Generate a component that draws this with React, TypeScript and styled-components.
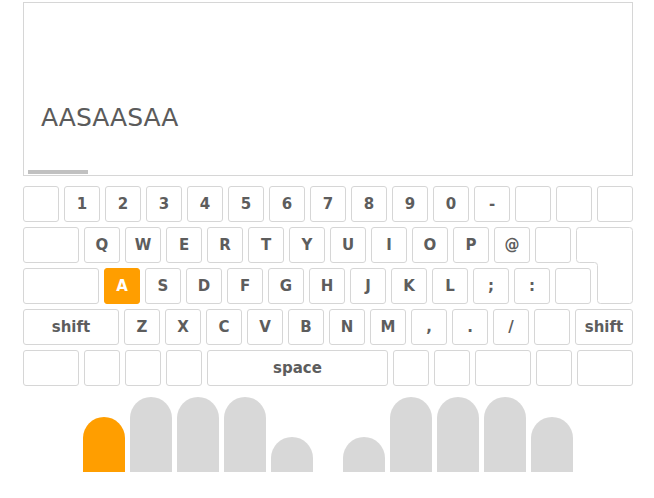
import React from "react";
import styled, { createGlobalStyle } from "styled-components";

const GlobalStyle = createGlobalStyle`
  html, body { margin: 0; padding: 0; background: #ffffff; }
  body { font-family: "DejaVu Sans", Verdana, sans-serif; }
  * { box-sizing: border-box; }
`;

const Page = styled.div`
  width: 654px;
  height: 498px;
  padding: 2px 0 0 23px;
  display: flex;
  flex-direction: column;
`;

const TextBox = styled.div`
  width: 610px;
  height: 174px;
  border: 1px solid #d6d6d6;
  display: flex;
  flex-direction: column;
  padding: 100px 0 1px 0;
`;

const Typed = styled.div`
  font-family: "DejaVu Sans", Verdana, sans-serif;
  font-size: 25px;
  line-height: 30px;
  color: #5b5b5b;
  padding-left: 17px;
  flex: 1;
`;

const ScrollBar = styled.div`
  width: 60px;
  height: 4px;
  margin-left: 4px;
  background: #c1c1c1;
`;

const Keyboard = styled.div`
  margin-top: 10px;
  display: flex;
  flex-direction: column;
  gap: 5px;
  width: 610px;
`;

const Row = styled.div`
  display: flex;
  gap: 5px;
  height: 36px;
`;

const Key = styled.div<{ $w?: number; $active?: boolean }>`
  width: ${(p) => p.$w ?? 36}px;
  height: 36px;
  flex: none;
  border: 1px solid ${(p) => (p.$active ? "#ff9e00" : "#d6d6d6")};
  border-radius: 3px;
  background: ${(p) => (p.$active ? "#ff9e00" : "#ffffff")};
  color: ${(p) => (p.$active ? "#ffffff" : "#5d5d5d")};
  font-family: "DejaVu Sans", Verdana, sans-serif;
  font-weight: bold;
  font-size: 15px;
  display: flex;
  align-items: center;
  justify-content: center;
`;

const EnterSlot = styled.div`
  width: 57px;
  height: 36px;
  flex: none;
  overflow: visible;
  svg { display: block; overflow: visible; }
`;

const Spacer = styled.div<{ $w: number }>`
  width: ${(p) => p.$w}px;
  flex: none;
`;

const Hands = styled.div`
  margin-top: 11px;
  display: flex;
  justify-content: center;
  gap: 30px;
  width: 610px;
`;

const Hand = styled.div`
  display: flex;
  align-items: flex-end;
  gap: 5px;
  height: 75px;
`;

const Finger = styled.div<{ $h: number; $active?: boolean }>`
  width: 42px;
  height: ${(p) => p.$h}px;
  border-radius: 21px 21px 0 0;
  background: ${(p) => (p.$active ? "#ff9e00" : "#d8d8d8")};
`;

const row1 = ["", "1", "2", "3", "4", "5", "6", "7", "8", "9", "0", "-", "", "", ""];
const row2 = ["Q", "W", "E", "R", "T", "Y", "U", "I", "O", "P", "@", ""];
const row3 = ["A", "S", "D", "F", "G", "H", "J", "K", "L", ";", ":", ""];
const row4 = ["Z", "X", "C", "V", "B", "N", "M", ",", ".", "/", ""];
const row5: { l: string; w: number }[] = [
  { l: "", w: 56 },
  { l: "", w: 36 },
  { l: "", w: 36 },
  { l: "", w: 36 },
  { l: "space", w: 181 },
  { l: "", w: 36 },
  { l: "", w: 36 },
  { l: "", w: 56 },
  { l: "", w: 36 },
  { l: "", w: 56 },
];

const EnterKey = () => (
  <EnterSlot>
    <svg width="57" height="77" viewBox="0 0 57 77">
      <path
        d="M3.5 0.5 H53.5 Q56.5 0.5 56.5 3.5 V73.5 Q56.5 76.5 53.5 76.5 H24.5 Q21.5 76.5 21.5 73.5 V38.5 Q21.5 35.5 18.5 35.5 H3.5 Q0.5 35.5 0.5 32.5 V3.5 Q0.5 0.5 3.5 0.5 Z"
        fill="#ffffff"
        stroke="#d6d6d6"
        strokeWidth="1"
      />
    </svg>
  </EnterSlot>
);

export default function App() {
  return (
    <>
      <GlobalStyle />
      <Page>
        <TextBox>
          <Typed>AASAASAA</Typed>
          <ScrollBar />
        </TextBox>
        <Keyboard>
          <Row>
            {row1.map((k, i) => (
              <Key key={i}>{k}</Key>
            ))}
          </Row>
          <Row>
            <Key $w={56} />
            {row2.map((k, i) => (
              <Key key={i}>{k}</Key>
            ))}
            <EnterKey />
          </Row>
          <Row>
            <Key $w={76} />
            {row3.map((k, i) => (
              <Key key={i} $active={k === "A"}>
                {k}
              </Key>
            ))}
            <Spacer $w={36} />
          </Row>
          <Row>
            <Key $w={96}>shift</Key>
            {row4.map((k, i) => (
              <Key key={i}>{k}</Key>
            ))}
            <Key $w={58}>shift</Key>
          </Row>
          <Row>
            {row5.map((k, i) => (
              <Key key={i} $w={k.w}>
                {k.l}
              </Key>
            ))}
          </Row>
        </Keyboard>
        <Hands>
          <Hand>
            <Finger $h={55} $active />
            <Finger $h={75} />
            <Finger $h={75} />
            <Finger $h={75} />
            <Finger $h={35} />
          </Hand>
          <Hand>
            <Finger $h={35} />
            <Finger $h={75} />
            <Finger $h={75} />
            <Finger $h={75} />
            <Finger $h={55} />
          </Hand>
        </Hands>
      </Page>
    </>
  );
}
